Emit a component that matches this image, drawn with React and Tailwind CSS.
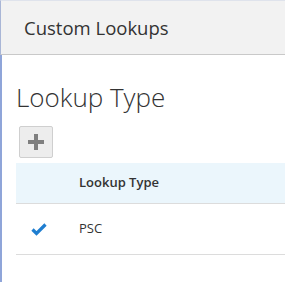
const App = () => {
  return (
    <div className="h-[282px] w-[285px] overflow-hidden bg-white font-['Open_Sans',sans-serif] text-[#333]">
      <header className="flex h-[55px] items-center border-b border-l border-t border-[#c9c9c9] border-l-[#a9b6d6] border-t-[#dfe3ec] bg-[#f2f2f2] pl-[23px]">
        <h1 className="text-[18.5px] text-[#333]">Custom Lookups</h1>
      </header>
      <main className="flex h-[227px] flex-col border-l-2 border-[#8fa5d9] pl-[14px] pt-[26px]">
        <h2 className="text-[26px] font-light leading-[32px] text-[#333]">Lookup Type</h2>
        <button
          type="button"
          className="ml-[3px] mt-[13px] grid h-[32px] w-[34px] place-items-center rounded-[2px] border border-[#cfcfcf] bg-[#ededed]"
        >
          <svg width="18" height="18" viewBox="0 0 18 18" className="text-[#7f7f7f]">
            <rect x="7" y="1" width="4" height="16" fill="currentColor" />
            <rect x="1" y="7" width="16" height="4" fill="currentColor" />
          </svg>
        </button>
        <table className="mt-[5px] w-full border-collapse text-[13px]">
          <thead>
            <tr className="h-[40px] border-b border-[#dcdcdc] bg-[#ebf6fc]">
              <th className="w-[63px]"></th>
              <th className="text-left font-semibold text-[#333]">Lookup Type</th>
            </tr>
          </thead>
          <tbody>
            <tr className="h-[51px] border-b border-[#dcdcdc]">
              <td className="pl-[15px]">
                <svg width="16" height="14" viewBox="0 0 16 14" className="text-[#1f7ed0]">
                  <path d="M1.5 7.5 L5.5 11.5 L14.5 2.5" fill="none" stroke="currentColor" strokeWidth="3.2" />
                </svg>
              </td>
              <td className="text-[#333]">PSC</td>
            </tr>
          </tbody>
        </table>
      </main>
    </div>
  );
};

export default App;
